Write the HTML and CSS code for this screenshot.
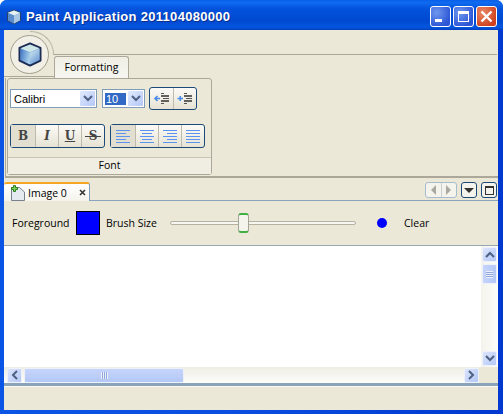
FILE: index.html
```html
<!DOCTYPE html>
<html lang="en">
<head>
    <meta charset="UTF-8">
    <title>Paint Application</title>
    <link rel="stylesheet" href="styles.css">
</head>
<body>
    <div class="window">
        <div class="titlebar">
            <svg class="app-icon" width="16" height="16" viewBox="0 0 16 16">
                <path d="M8 1 14.500 3.500V11.500L8 15 1.500 11.500V3.500Z" fill="#7fb0dc" stroke="#2a3f66" stroke-linejoin="round"/>
                <path d="M8 1.500 14 3.800 8 6.500 2 3.800Z" fill="#e4f2f0"/>
                <path d="M8 6.500V14.500L14 11.300V3.800Z" fill="#a9c8e4"/>
                <path d="M2 4 8 6.500V14.500L2 11.300Z" fill="#5b8ccc"/>
            </svg>
            <span class="title">Paint Application 201104080000</span>
            <div class="win-buttons">
                <div class="win-btn"><span class="glyph-min"></span></div>
                <div class="win-btn"><span class="glyph-max"></span></div>
                <div class="win-btn close">
                    <svg width="13" height="13" viewBox="0 0 13 13"><path d="M1.500 1.500 11.500 11.500M11.500 1.500 1.500 11.500" stroke="#fff" stroke-width="2.400"/></svg>
                </div>
            </div>
        </div>

        <div class="client">
            <div class="ribbon-head">
                <div class="orb-arc">
                    <div class="orb">
                        <svg width="24" height="25" viewBox="0 0 24 25">
                            <defs>
                                <linearGradient id="cubeLeft" x1="0" y1="0" x2="1" y2="0.300">
                                    <stop offset="0" stop-color="#3f74c4"/>
                                    <stop offset="1" stop-color="#a5cdea"/>
                                </linearGradient>
                                <linearGradient id="cubeRight" x1="0" y1="0" x2="0.600" y2="1">
                                    <stop offset="0" stop-color="#d8ecf2"/>
                                    <stop offset="1" stop-color="#6c9bd6"/>
                                </linearGradient>
                            </defs>
                            <path d="M12 1.500 22.500 6V18.500L12 23.500 1.500 18.500V6Z" fill="#7ba9d8" stroke="#1d2c55" stroke-width="2" stroke-linejoin="round"/>
                            <path d="M12 2.500 21.500 6.300 12 10.300 2.500 6.300Z" fill="#cfe6e6"/>
                            <path d="M2.500 6.800 12 10.800V22.500L2.500 18Z" fill="url(#cubeLeft)"/>
                            <path d="M12 10.800 21.500 6.800V18L12 22.500Z" fill="url(#cubeRight)"/>
                        </svg>
                    </div>
                </div>
                <div class="head-rest">
                    <div class="tab-formatting">Formatting</div>
                </div>
            </div>

            <div class="ribbon-body">
                <div class="band">
                    <div class="band-body">
                        <div class="band-row first">
                            <div class="combo font-combo">
                                <span class="combo-text">Calibri</span>
                                <span class="combo-arrow"><svg width="10" height="7" viewBox="0 0 10 7"><path d="M1 1 5 5 9 1" fill="none" stroke="#4d6185" stroke-width="2"/></svg></span>
                            </div>
                            <div class="combo size-combo">
                                <span class="combo-text"><span class="selected">10</span></span>
                                <span class="combo-arrow"><svg width="10" height="7" viewBox="0 0 10 7"><path d="M1 1 5 5 9 1" fill="none" stroke="#4d6185" stroke-width="2"/></svg></span>
                            </div>
                            <div class="btn-group indent">
                                <div class="tool">
                                    <svg width="18" height="16" viewBox="0 0 18 16"><path d="M8 2.500H11M8 12.500H11M10 7.500H16" stroke="#555"/><path d="M8 5H16M8 10H16" stroke="#333" stroke-width="1.500"/><path d="M7 7.500H2M4.500 5 2 7.500 4.500 10" fill="none" stroke="#4a8be8" stroke-width="1.600"/></svg>
                                </div>
                                <div class="tool">
                                    <svg width="18" height="16" viewBox="0 0 18 16"><path d="M8 2.500H11M8 12.500H11M10 7.500H16" stroke="#555"/><path d="M8 5H16M8 10H16" stroke="#333" stroke-width="1.500"/><path d="M1.500 7.500H7M4.250 5V10" fill="none" stroke="#4a8be8" stroke-width="1.600"/></svg>
                                </div>
                            </div>
                        </div>
                        <div class="band-row second">
                            <div class="btn-group tall">
                                <div class="tool active"><span class="fmt">B</span></div>
                                <div class="tool"><span class="fmt italic">I</span></div>
                                <div class="tool"><span class="fmt under">U</span></div>
                                <div class="tool"><span class="fmt strike">S</span></div>
                            </div>
                            <div class="btn-group tall">
                                <div class="tool active">
                                    <svg width="16" height="14" viewBox="0 0 16 14"><path d="M1 1.500H15M1 4.500H11M1 7.500H15M1 10.500H11M1 13.500H15" stroke="#5b94f0"/></svg>
                                </div>
                                <div class="tool">
                                    <svg width="16" height="14" viewBox="0 0 16 14"><path d="M1 1.500H15M3 4.500H13M1 7.500H15M3 10.500H13M1 13.500H15" stroke="#5b94f0"/></svg>
                                </div>
                                <div class="tool">
                                    <svg width="16" height="14" viewBox="0 0 16 14"><path d="M1 1.500H15M5 4.500H15M1 7.500H15M5 10.500H15M1 13.500H15" stroke="#5b94f0"/></svg>
                                </div>
                                <div class="tool">
                                    <svg width="16" height="14" viewBox="0 0 16 14"><path d="M1 1.500H15M1 4.500H15M1 7.500H15M1 10.500H15M1 13.500H15" stroke="#5b94f0"/></svg>
                                </div>
                            </div>
                        </div>
                    </div>
                    <div class="band-label">Font</div>
                </div>
            </div>

            <div class="doc-tabs">
                <div class="doc-tab">
                    <svg class="doc-icon" width="16" height="16" viewBox="0 0 16 16">
                        <path d="M1.500 2.500H9.500L14.500 7V15.500H1.500Z" fill="#e4eaf0" stroke="#76818c"/>
                        <path d="M3.500 0.500H5.500V2.500H7.500V4.500H5.500V6.500H3.500V4.500H1.500V2.500H3.500Z" fill="#7ad35a" stroke="#2f7d22"/>
                    </svg>
                    <span>Image 0</span>
                    <svg class="doc-close" width="7" height="7" viewBox="0 0 7 7"><path d="M1 1 6 6M6 1 1 6" stroke="#333" stroke-width="1.600"/></svg>
                </div>
                <div class="doc-actions">
                    <div class="nav-group">
                        <div class="nav-btn"><span class="tri-left"></span></div>
                        <div class="nav-btn"><span class="tri-right"></span></div>
                    </div>
                    <div class="square-btn"><span class="tri-down"></span></div>
                    <div class="square-btn"><span class="box"></span></div>
                </div>
            </div>

            <div class="toolbar">
                <span class="lbl-fg">Foreground</span>
                <div class="swatch"></div>
                <span class="lbl-brush">Brush Size</span>
                <div class="slider">
                    <div class="slider-track"></div>
                    <div class="slider-thumb"></div>
                </div>
                <div class="dot"></div>
                <span>Clear</span>
            </div>

            <div class="canvas-wrap">
                <div class="canvas-top">
                    <div class="canvas"></div>
                    <div class="vscroll">
                        <div class="sb-btn"><svg width="10" height="7" viewBox="0 0 10 7"><path d="M1 6 5 2 9 6" fill="none" stroke="#4d6185" stroke-width="2"/></svg></div>
                        <div class="v-thumb"><span class="grip-v"></span></div>
                        <div class="v-space"></div>
                        <div class="sb-btn"><svg width="10" height="7" viewBox="0 0 10 7"><path d="M1 1 5 5 9 1" fill="none" stroke="#4d6185" stroke-width="2"/></svg></div>
                    </div>
                </div>
                <div class="hscroll">
                    <div class="sb-btn"><svg width="7" height="10" viewBox="0 0 7 10"><path d="M6 1 2 5 6 9" fill="none" stroke="#4d6185" stroke-width="2"/></svg></div>
                    <div class="h-thumb"><span class="grip-h"></span></div>
                    <div class="h-space"></div>
                    <div class="sb-btn"><svg width="7" height="10" viewBox="0 0 7 10"><path d="M1 1 5 5 1 9" fill="none" stroke="#4d6185" stroke-width="2"/></svg></div>
                    <div class="corner"></div>
                </div>
            </div>

            <div class="statusbar"></div>
        </div>
    </div>
</body>
</html>
```

FILE: styles.css
```css
html, body {
    margin: 0;
    padding: 0;
}
body {
    font-family: "Open Sans", "Liberation Sans", sans-serif;
    font-size: 10.5px;
    color: #000;
    overflow: hidden;
}
.window {
    width: 503px;
    height: 414px;
    display: flex;
    flex-direction: column;
    box-sizing: border-box;
    border-radius: 7px 7px 0 0;
    background: linear-gradient(90deg, #0a55e6 0, #0a4ce0 50%, #0038d0 100%);
}
.titlebar {
    height: 30px;
    flex: none;
    display: flex;
    align-items: center;
    padding: 3px 6px 0 6px;
    box-sizing: border-box;
    border-radius: 7px 7px 0 0;
    background: linear-gradient(#0a5fe8 0, #0f6cf0 8%, #0352dc 30%, #0049d0 70%, #0457e0 90%, #0340c0 100%);
}
.app-icon {
    margin-right: 4px;
}
.title {
    flex: 1;
    font-family: "Liberation Sans", sans-serif;
    font-weight: bold;
    font-size: 13px;
    letter-spacing: 0.3px;
    color: #fff;
    text-shadow: 1px 1px 0 #0a2e8c;
}
.win-buttons {
    display: flex;
    gap: 2px;
}
.win-btn {
    width: 21px;
    height: 21px;
    box-sizing: border-box;
    border: 1px solid #fff;
    border-radius: 3px;
    background: radial-gradient(circle at 30% 30%, #6f97ee, #2c56d6 75%);
    display: flex;
    align-items: center;
    justify-content: center;
}
.win-btn.close {
    background: radial-gradient(circle at 30% 30%, #e98a68, #d0421f 75%);
}
.glyph-min {
    width: 7px;
    height: 3px;
    background: #fff;
    margin: 8px 4px 0 0;
}
.glyph-max {
    width: 9px;
    height: 7px;
    border: 1px solid #fff;
    border-top-width: 3px;
}

.client {
    flex: 1;
    margin: 0 5px 4px 4px;
    background: #ebe8d8;
    display: flex;
    flex-direction: column;
    min-height: 0;
}

.ribbon-head {
    height: 48px;
    flex: none;
    display: flex;
    margin-right: 1px;
}
.orb-arc {
    width: 50px;
    height: 47px;
    flex: none;
    box-sizing: border-box;
    position: relative;
    border-bottom: 1px solid #aca899;
    padding: 5px 0 0 6px;
}
.orb-arc::before {
    content: "";
    position: absolute;
    top: 1px;
    right: 0;
    width: 23px;
    height: 23px;
    border-top: 1px solid #b9b6a4;
    border-right: 1px solid #b9b6a4;
    border-radius: 0 23px 0 0;
}
.orb {
    width: 37px;
    height: 37px;
    border-radius: 50%;
    border: 1px solid #a09d8c;
    background: #f1efe6;
    display: flex;
    align-items: center;
    justify-content: center;
}
.head-rest {
    flex: 1;
    margin-top: 24px;
    border-top: 1px solid #aca899;
    display: flex;
    align-items: flex-end;
}
.tab-formatting {
    width: 75px;
    height: 22px;
    box-sizing: border-box;
    border: 1px solid #aca899;
    border-bottom: none;
    border-radius: 3px 3px 0 0;
    background: linear-gradient(#f0efe6, #f6f5ef);
    text-align: center;
    line-height: 21px;
}

.ribbon-body {
    height: 100px;
    flex: none;
    box-sizing: border-box;
    margin-left: 1px;
    padding-left: 1px;
    border-left: 1px solid #aca899;
    border-bottom: 2px solid #aca899;
}
.band {
    width: 205px;
    height: 97px;
    box-sizing: border-box;
    border: 1px solid #aca899;
    border-radius: 3px;
    display: flex;
    flex-direction: column;
}
.band-body {
    flex: 1;
    padding: 8px 3px 0 2px;
}
.band-row {
    display: flex;
    align-items: center;
}
.band-row.first {
    gap: 5px;
}
.band-row.second {
    gap: 5px;
    margin-top: 14px;
}
.band-label {
    height: 17px;
    flex: none;
    box-sizing: border-box;
    border-top: 1px solid #c8c5b5;
    background: #f0eee3;
    text-align: center;
    line-height: 15px;
}
.combo {
    height: 19px;
    box-sizing: border-box;
    border: 1px solid #7f9db9;
    background: #fff;
    display: flex;
    align-items: center;
    padding: 1px;
}
.font-combo {
    width: 87px;
}
.size-combo {
    width: 43px;
}
.combo-text {
    flex: 1;
    padding-left: 2px;
    font-family: "Liberation Sans", sans-serif;
    font-size: 11px;
}
.selected {
    display: block;
    width: 20px;
    margin-left: -1px;
    padding-left: 1px;
    background: #316ac5;
    color: #fff;
}
.combo-arrow {
    width: 15px;
    height: 15px;
    border-radius: 1px;
    background: linear-gradient(135deg, #e1eafe, #b4c7f5);
    display: flex;
    align-items: center;
    justify-content: center;
}
.btn-group {
    display: flex;
    height: 23px;
    box-sizing: border-box;
    border: 1px solid #1c4a78;
    border-radius: 3px;
    background: linear-gradient(#fbfaf6, #e6e3d4);
}
.btn-group.tall {
    height: 24px;
}
.indent {
    margin-left: -1px;
}
.tool {
    width: 23px;
    box-sizing: border-box;
    display: flex;
    align-items: center;
    justify-content: center;
    border-left: 1px solid #bdbbae;
}
.tool:first-child {
    width: 24px;
    border-left: none;
}
.indent .tool:first-child {
    width: 23px;
}
.tool.active {
    background: #e2dfd1;
}
.fmt {
    font-family: "DejaVu Serif", serif;
    font-size: 12px;
    line-height: 16px;
    color: #444;
    font-weight: bold;
}
.italic {
    font-style: italic;
}
.under {
    text-decoration: underline;
}
.strike {
    position: relative;
}
.strike::after {
    content: "";
    position: absolute;
    left: -4px;
    right: -4px;
    top: 8px;
    height: 1px;
    background: #444;
}

.doc-tabs {
    height: 22px;
    flex: none;
    display: flex;
    align-items: flex-end;
    justify-content: space-between;
}
.doc-tab {
    width: 86px;
    height: 19px;
    box-sizing: border-box;
    border-top: 2px solid #f5a623;
    border-right: 1px solid #7f9db9;
    border-radius: 3px 3px 0 0;
    background: linear-gradient(#fff, #f4f3ec);
    display: flex;
    align-items: center;
    position: relative;
    top: 1px;
}
.doc-icon {
    margin-left: 6px;
    margin-right: 2px;
}
.doc-tab span {
    flex: 1;
}
.doc-close {
    margin-right: 3px;
}
.doc-actions {
    display: flex;
    gap: 4px;
    margin-right: 1px;
    margin-bottom: 2px;
}
.nav-group {
    display: flex;
    width: 32px;
    height: 16px;
    box-sizing: border-box;
    border: 1px solid #a6bccf;
    border-radius: 3px;
    background: #f4f3ec;
}
.nav-btn {
    flex: 1;
    display: flex;
    align-items: center;
    justify-content: center;
}
.nav-btn + .nav-btn {
    border-left: 1px solid #c9cfd2;
}
.tri-left {
    border-style: solid;
    border-width: 5px 5px 5px 0;
    border-color: transparent #a9a9a2 transparent transparent;
}
.tri-right {
    border-style: solid;
    border-width: 5px 0 5px 5px;
    border-color: transparent transparent transparent #a9a9a2;
}
.square-btn {
    width: 16px;
    height: 16px;
    box-sizing: border-box;
    border: 1px solid #1c4a78;
    border-radius: 3px;
    background: #f4f3ec;
    display: flex;
    align-items: center;
    justify-content: center;
}
.tri-down {
    border-style: solid;
    border-width: 5px 5px 0 5px;
    border-color: #333 transparent transparent transparent;
}
.box {
    width: 7px;
    height: 6px;
    border: 1px solid #333;
    border-top-width: 2px;
}

.toolbar {
    height: 45px;
    flex: none;
    box-sizing: border-box;
    border-top: 1px solid #8aa4c0;
    display: flex;
    align-items: center;
    padding-left: 8px;
}
.lbl-fg {
    width: 64px;
}
.swatch {
    width: 24px;
    height: 24px;
    box-sizing: border-box;
    border: 1px solid #000;
    background: #0000ff;
}
.lbl-brush {
    margin-left: 6px;
    width: 64px;
}
.slider {
    position: relative;
    width: 186px;
    height: 22px;
    display: flex;
    align-items: center;
}
.slider-track {
    width: 100%;
    height: 4px;
    box-sizing: border-box;
    border: 1px solid #b5b2a2;
    border-radius: 2px;
    background: #f7f6f0;
}
.slider-thumb {
    position: absolute;
    left: 68px;
    top: 1px;
    width: 11px;
    height: 20px;
    box-sizing: border-box;
    border: 1px solid #a5a498;
    border-top: 2px solid #3fb03f;
    border-bottom: 2px solid #3fb03f;
    border-radius: 3px;
    background: #f4f3ec;
}
.dot {
    width: 10px;
    height: 10px;
    border-radius: 50%;
    background: #0000ff;
    margin-left: 21px;
    margin-right: 17px;
}

.canvas-wrap {
    height: 141px;
    flex: none;
    box-sizing: border-box;
    border-top: 1px solid #9aa7b0;
    border-bottom: 3px solid #8ba3b8;
    background: #fff;
    display: flex;
    flex-direction: column;
}
.canvas-top {
    flex: 1;
    display: flex;
    min-height: 0;
}
.canvas {
    flex: 1;
}
.vscroll {
    width: 17px;
    background: linear-gradient(90deg, #f4f3ec, #fdfdfa);
    display: flex;
    flex-direction: column;
    padding: 1px 1px;
    box-sizing: border-box;
}
.sb-btn {
    width: 15px;
    height: 15px;
    flex: none;
    box-sizing: border-box;
    border: 1px solid #eef1fb;
    border-radius: 2px;
    background: linear-gradient(135deg, #dbe5fc, #b4c8f6);
    display: flex;
    align-items: center;
    justify-content: center;
}
.v-thumb {
    width: 15px;
    height: 20px;
    flex: none;
    margin-top: 2px;
    box-sizing: border-box;
    border: 1px solid #eef1fb;
    border-radius: 2px;
    background: linear-gradient(90deg, #c5d4fb, #b4c8f6);
    display: flex;
    align-items: center;
    justify-content: center;
}
.grip-v {
    width: 7px;
    height: 7px;
    background: repeating-linear-gradient(#eef1fb 0 1px, #8fa6dc 1px 2px);
}
.v-space {
    flex: 1;
}
.hscroll {
    height: 16px;
    flex: none;
    display: flex;
    align-items: center;
    background: linear-gradient(#eeede5, #fdfdfa);
    padding-left: 3px;
}
.h-thumb {
    width: 160px;
    height: 15px;
    margin-left: 2px;
    box-sizing: border-box;
    border: 1px solid #eef1fb;
    border-radius: 2px;
    background: linear-gradient(#c5d4fb, #b4c8f6);
    display: flex;
    align-items: center;
    justify-content: center;
}
.grip-h {
    width: 7px;
    height: 7px;
    background: repeating-linear-gradient(90deg, #eef1fb 0 1px, #8fa6dc 1px 2px);
}
.h-space {
    flex: 1;
}
.corner {
    width: 19px;
    height: 16px;
    background: #ebe8d8;
}
.statusbar {
    flex: 1;
    border-top: 1px solid #fbfaf4;
}
```
